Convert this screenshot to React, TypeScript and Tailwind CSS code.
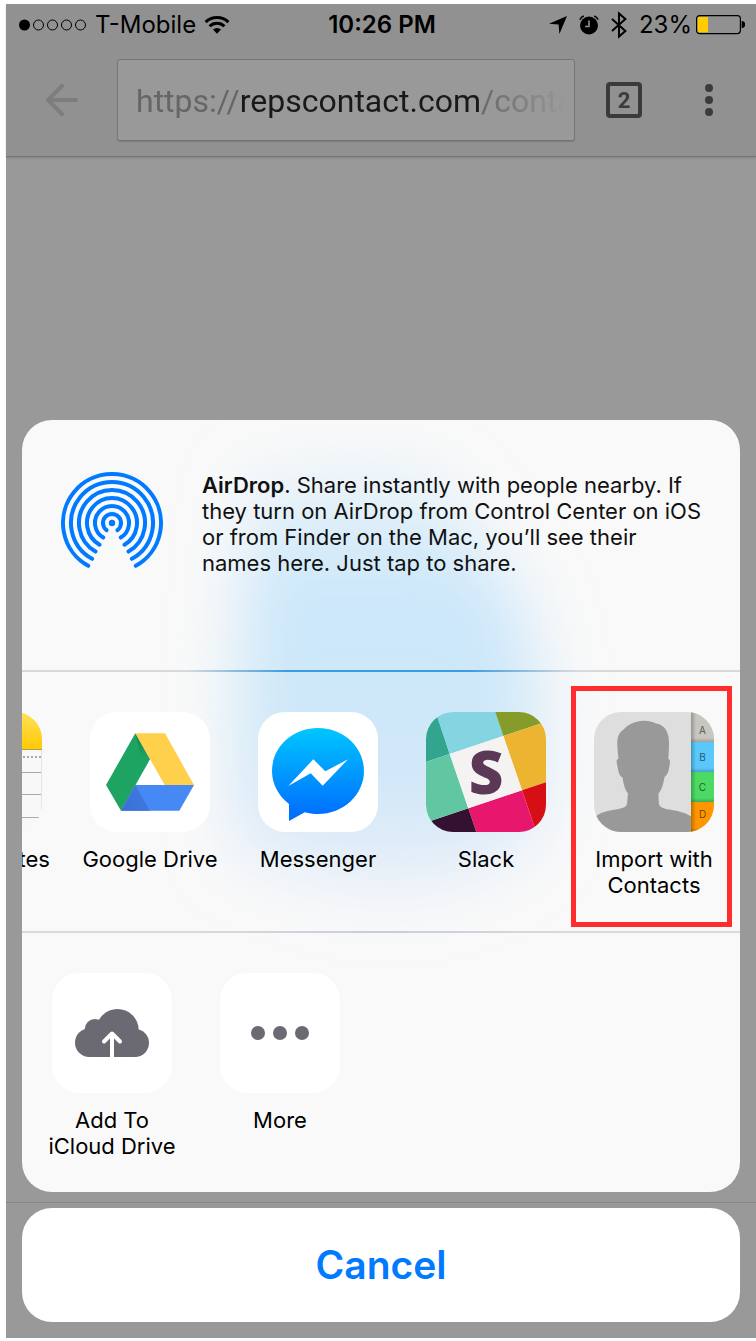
import type { ReactNode } from "react";

function SignalDots() {
  return (
    <svg width="68" height="12" viewBox="0 0 68 12" aria-label="Signal strength" role="img">
      <circle cx="5.5" cy="6" r="5.5" />
      {[19.5, 33.5, 47.5, 61.5].map((cx) => (
        <circle key={cx} cx={cx} cy="6" r="5" fill="none" stroke="#000" strokeWidth="1" />
      ))}
    </svg>
  );
}

function WifiIcon() {
  return (
    <svg width="26" height="20" viewBox="0 0 26 20" aria-label="Wi-Fi" role="img">
      <g fill="none" stroke="#000" strokeWidth="3">
        <path d="M1.6 7.2a16.4 16.4 0 0 1 22.8 0" />
        <path d="M5.6 11.3a10.6 10.6 0 0 1 14.8 0" />
      </g>
      <path d="M9 14.6a5.7 5.7 0 0 1 8 0l-4 4.2z" />
    </svg>
  );
}

function LocationIcon() {
  return (
    <svg width="18" height="18" viewBox="0 0 18 18" aria-hidden="true">
      <path d="M18 0 10.4 18 9.6 8.6 0 7.8z" />
    </svg>
  );
}

function AlarmIcon() {
  return (
    <svg width="20" height="20" viewBox="0 0 20 20" aria-hidden="true">
      <circle cx="10" cy="10.5" r="9" />
      <path d="M10 5.5v6H6" fill="none" stroke="#919191" strokeWidth="1.6" />
      <path d="M.8 4.6a8 8 0 0 1 4-3.6M19.2 4.6a8 8 0 0 0-4-3.6" fill="none" stroke="#000" strokeWidth="1.4" />
    </svg>
  );
}

function BluetoothIcon() {
  return (
    <svg width="16" height="28" viewBox="0 0 16 28" aria-hidden="true">
      <path d="m1 8 13.4 12L8 25.6V2.4L14.4 8 1 20" fill="none" stroke="#000" strokeWidth="2" />
    </svg>
  );
}

function BatteryIcon() {
  return (
    <svg width="49" height="20" viewBox="0 0 49 20" aria-hidden="true">
      <rect x=".6" y=".6" width="43.8" height="18" rx="3" fill="none" stroke="#000" strokeWidth="1.2" />
      <path d="M3 2h9v15.2H3a1.3 1.3 0 0 1-1.3-1.3V3.3A1.3 1.3 0 0 1 3 2z" fill="#ffcc00" />
      <path d="M45.6 6a3.600 3.600 0 0 1 0 7.200z" />
    </svg>
  );
}

function StatusBar() {
  return (
    <div className="grid h-10 grid-cols-[1fr_auto_1fr] items-center pl-[13px] pr-[11px] pt-[2px] text-2xl text-black">
      <div className="flex items-center">
        <SignalDots />
        <span className="ml-2">T-Mobile</span>
        <span className="ml-2">
          <WifiIcon />
        </span>
      </div>
      <span className="font-semibold">10:26 PM</span>
      <div className="flex items-center justify-end">
        <LocationIcon />
        <span className="ml-3">
          <AlarmIcon />
        </span>
        <span className="ml-3">
          <BluetoothIcon />
        </span>
        <span className="ml-3">23%</span>
        <span className="ml-1">
          <BatteryIcon />
        </span>
      </div>
    </div>
  );
}

function Toolbar() {
  return (
    <div className="flex items-center py-[15px]">
      <button type="button" aria-label="Back" className="flex w-[111px] shrink-0 justify-center">
        <svg width="32" height="32" viewBox="0 0 32 32" fill="none" stroke="#7d7d7d" strokeWidth="4" strokeLinecap="round">
          <path d="M30 16H3M16 2 2 16l14 14" strokeLinejoin="round" />
        </svg>
      </button>
      <button
        type="button"
        aria-label="Address"
        className="h-[82px] min-w-0 flex-1 rounded-[3px] border border-[#757575] bg-[#999999] pl-[18px] pr-2 pt-[2px] text-left font-[Roboto,sans-serif] text-[32px] text-[#666666] shadow-[0_1px_1px_rgba(0,0,0,0.15)]"
      >
        <span className="block overflow-hidden whitespace-nowrap [mask-image:linear-gradient(to_right,#000_calc(100%-90px),transparent)]">
          https://<span className="text-[#191919]">repscontact.com</span>/contacts
        </span>
      </button>
      <button type="button" aria-label="2 open tabs" className="flex w-[98px] shrink-0 justify-center">
        <span className="flex size-9 items-center justify-center rounded-[4px] border-4 border-[#3b3b3b] font-[Roboto,sans-serif] text-[22px] font-bold text-[#3b3b3b]">
          2
        </span>
      </button>
      <button type="button" aria-label="Menu" className="mr-[11px] flex w-[72px] shrink-0 justify-center">
        <svg width="8" height="32" viewBox="0 0 8 32" fill="#3b3b3b">
          <circle cx="4" cy="4" r="4" />
          <circle cx="4" cy="16" r="4" />
          <circle cx="4" cy="28" r="4" />
        </svg>
      </button>
    </div>
  );
}

const rings = [
  { r: 49, angle: 29 },
  { r: 41, angle: 29 },
  { r: 33, angle: 30 },
  { r: 25, angle: 30 },
  { r: 17, angle: 31 },
  { r: 9, angle: 37 },
];

function AirDropIcon() {
  return (
    <svg width="102" height="102" viewBox="-51 -51 102 102" className="shrink-0" aria-hidden="true">
      {rings.map(({ r, angle }) => {
        const a = (angle * Math.PI) / 180;
        const x = r * Math.sin(a);
        const y = r * Math.cos(a);
        return (
          <path
            key={r}
            d={`M${-x} ${y}A${r} ${r} 0 1 1 ${x} ${y}`}
            fill="none"
            stroke="#007aff"
            strokeWidth="4"
            strokeLinecap="round"
          />
        );
      })}
      <circle r="3.2" fill="#007aff" />
    </svg>
  );
}

function NotesIcon() {
  return (
    <svg viewBox="0 0 120 120" className="size-full" aria-hidden="true">
      <defs>
        <linearGradient id="notes-top" x1="0" y1="0" x2="0" y2="1">
          <stop offset="0" stopColor="#ffe05a" />
          <stop offset="1" stopColor="#ffcb05" />
        </linearGradient>
      </defs>
      <rect width="120" height="120" fill="#f8f8f8" />
      <rect width="120" height="37" fill="url(#notes-top)" />
      <path d="M0 37.5h120" stroke="#b09a50" />
      <path d="M1 45h119" stroke="#aaa" strokeWidth="2" strokeDasharray="2 2" />
      <path d="M0 60.5h120M0 82.5h120M0 105.5h117" stroke="#aaa" />
      <path d="M119.5 38v60" stroke="#e4e4e4" />
    </svg>
  );
}

function DriveIcon() {
  return (
    <svg viewBox="0 0 120 120" className="size-full" aria-hidden="true">
      <defs>
        <linearGradient id="drive-green" x1="0" y1="0" x2=".6" y2="1">
          <stop offset="0" stopColor="#17814c" />
          <stop offset="1" stopColor="#1da362" />
        </linearGradient>
        <linearGradient id="drive-blue" x1="0" y1="1" x2="1" y2=".4">
          <stop offset="0" stopColor="#3a6fd6" />
          <stop offset="1" stopColor="#4079e0" />
        </linearGradient>
      </defs>
      <path d="M45.3 21.3 60 47.3 31 98.7 16 73z" fill="#1da362" />
      <path d="M45.3 21.3 60 47.3 51 43z" fill="url(#drive-green)" />
      <path d="M45.3 21.3H75L104 73H74.7z" fill="#ffd04b" />
      <path d="M45.3 73H104L89.3 98.7H31z" fill="#4688f4" />
      <path d="M45.3 73 60 98.7H31z" fill="url(#drive-blue)" />
    </svg>
  );
}

function MessengerIcon() {
  return (
    <svg viewBox="0 0 120 120" className="size-full" aria-hidden="true">
      <defs>
        <linearGradient id="messenger" gradientUnits="userSpaceOnUse" x1="60" y1="16" x2="60" y2="102">
          <stop offset="0" stopColor="#00c6ff" />
          <stop offset="1" stopColor="#0070ff" />
        </linearGradient>
      </defs>
      <path
        d="M60 16c25.4 0 46 19.2 46 43s-20.6 43-46 43c-4.6 0-9-.6-13.2-1.8L31 109V92C20.8 84.1 14 72.3 14 59c0-23.8 20.6-43 46-43z"
        fill="url(#messenger)"
      />
      <path d="M30.3 74 55.3 47.3 67.3 59.3 90 47.3 64.7 73.7 52.7 61.3z" fill="#fff" />
    </svg>
  );
}

function SlackIcon() {
  return (
    <svg viewBox="0 0 120 120" className="size-full" aria-hidden="true">
      <path d="M0 0h10l13.7 42L0 50z" fill="#33a58f" />
      <path d="M9.5 0h60l7.8 24-53.6 18z" fill="#84d4e2" />
      <path d="M69.3 0H120v9.8L77.3 24z" fill="#859c2b" />
      <path d="M120 9.8v60.5L96 78.3 77.3 24z" fill="#ecb430" />
      <path d="M120 70.3V120h-9.8L96 78.3z" fill="#d50f14" />
      <path d="M110.2 120H50.3l-8-23.7L96 78.3z" fill="#e6176c" />
      <path d="M50.3 120H0v-9.5l42.3-14.2z" fill="#351131" />
      <path d="M0 110.5V50l23.7-8 18.6 54.3z" fill="#60c7a2" />
      <path d="M23.7 42 77.3 24 96 78.3 42.3 96.3z" fill="#f4f3f2" />
      <text
        x="60"
        y="82"
        textAnchor="middle"
        className="fill-[#5b3856] font-['Open_Sans',sans-serif] text-[60px] font-extrabold"
      >
        S
      </text>
    </svg>
  );
}

const contactTabs = [
  { letter: "A", y: 0, textY: 22, color: "#c8c6c1" },
  { letter: "B", y: 30, textY: 49, color: "#5ac8fa" },
  { letter: "C", y: 60, textY: 79, color: "#4cd964" },
  { letter: "D", y: 90, textY: 106, color: "#ff9500" },
];

function ContactsIcon() {
  return (
    <svg viewBox="0 0 120 120" className="size-full" aria-hidden="true">
      <defs>
        <linearGradient id="tab-side">
          <stop offset="0" stopColor="#000" stopOpacity=".25" />
          <stop offset="1" stopColor="#000" stopOpacity="0" />
        </linearGradient>
        <linearGradient id="tab-base" x1="0" y1="0" x2="0" y2="1">
          <stop offset="0" stopColor="#000" stopOpacity="0" />
          <stop offset="1" stopColor="#000" stopOpacity=".2" />
        </linearGradient>
      </defs>
      <rect width="120" height="120" fill="#dedede" />
      <path
        d="M0 120v-14c4-4 8-5.5 14-7 8-2 19-2 19-7.5l1-10C31 78 29.5 72 28.5 65.5c-3.5-2-4-6-5-11-.7-4-2-7 1-7.5C23.8 39 22.7 33 23.7 26c1-4 3-7 6-8.500C33 13 40 10 45 9.200c7-.8 12-.2 17 2.300 7 1 11 6 12.500 13 1 7 .3 15-.2 22.500 2.500 0 1.500 5 .8 9-.7 4-2 7.500-4.600 9C69.500 72 67.500 78 64.500 81.500l.3 10c.7 6 11.700 6 18.700 7.500 6 1.500 11 3.500 13.500 5.500V120z"
        fill="#999"
      />
      {contactTabs.map(({ letter, y, textY, color }) => (
        <g key={letter}>
          <rect x="97" y={y} width="23" height="30" fill={color} />
          <rect x="97" y={y + 26} width="23" height="4" fill="url(#tab-base)" />
          <text x="108.5" y={textY} textAnchor="middle" className="fill-black/60 text-[10px]">
            {letter}
          </text>
        </g>
      ))}
      <rect x="97" width="5" height="120" fill="url(#tab-side)" />
    </svg>
  );
}

function CloudUploadIcon() {
  return (
    <svg viewBox="0 0 120 120" className="size-full" aria-hidden="true">
      <g fill="#6b6a73">
        <circle cx="37.3" cy="69.7" r="14.3" />
        <circle cx="43" cy="56.3" r="10.3" />
        <circle cx="65.5" cy="57.2" r="21.2" />
        <circle cx="83" cy="70" r="14" />
        <path d="M37 60h46v24H37z" />
      </g>
      <path d="M60 86V61M52 68.5l8-8 8 8" fill="none" stroke="#fff" strokeWidth="4" strokeLinecap="round" strokeLinejoin="round" />
    </svg>
  );
}

function MoreIcon() {
  return (
    <svg viewBox="0 0 120 120" className="size-full" fill="#6b6a73" aria-hidden="true">
      <circle cx="38" cy="60" r="7" />
      <circle cx="60" cy="60" r="7" />
      <circle cx="82" cy="60" r="7" />
    </svg>
  );
}

function ShareItem({ icon, label, highlighted = false }: { icon: ReactNode; label: ReactNode; highlighted?: boolean }) {
  return (
    <button type="button" className="relative flex h-[259px] w-[168px] shrink-0 flex-col items-center pt-10">
      <span className="size-[120px] overflow-hidden rounded-[27px] bg-white">{icon}</span>
      <span className="mt-[14px] whitespace-nowrap text-[22px] leading-[26px] text-black">{label}</span>
      {highlighted && (
        <span className="absolute bottom-1 left-px right-[6px] top-[14px] border-[5px] border-[#ff2d2d]" />
      )}
    </button>
  );
}

function SheetGlow() {
  return (
    <svg className="absolute inset-0 size-full" viewBox="0 0 718 772" aria-hidden="true">
      <defs>
        <filter id="glow-blur" x="-50%" y="-50%" width="200%" height="200%">
          <feGaussianBlur stdDeviation="32" />
        </filter>
        <linearGradient id="glow-fill" x1="0" y1="0" x2="0" y2="1">
          <stop offset="0" stopColor="#cbe7fa" stopOpacity=".35" />
          <stop offset=".3" stopColor="#cbe7fa" />
          <stop offset=".75" stopColor="#d1e8f8" />
          <stop offset="1" stopColor="#dfe9f8" stopOpacity=".6" />
        </linearGradient>
      </defs>
      <path
        d="M228 60 400 50C450 110 515 180 515 270V400C490 450 400 485 330 470L215 430V300z"
        fill="url(#glow-fill)"
        filter="url(#glow-blur)"
      />
    </svg>
  );
}

function ShareSheet() {
  return (
    <section aria-label="Share" className="relative mx-4 overflow-hidden rounded-[30px] bg-[#f9f9f9]">
      <SheetGlow />
      <div className="relative flex h-[250px] items-start pl-[39px] pr-8 pt-[52px]">
        <AirDropIcon />
        <p className="ml-[39px] text-[22px] leading-[26px] text-[#111111]">
          <strong className="font-semibold">AirDrop</strong>. Share instantly with people nearby. If
          <br />
          they turn on AirDrop from Control Center on iOS
          <br />
          or from Finder on the Mac, you’ll see their
          <br />
          names here. Just tap to share.
        </p>
      </div>
      <div className="relative h-[2px] bg-[linear-gradient(to_right,#d8d8df_23%,#3b9be0_37%,#3b9be0_62%,#d8d8df_77%)]" />
      <div className="relative flex justify-end overflow-hidden pr-[2px]">
        <ShareItem icon={<NotesIcon />} label="Add to Notes" />
        <ShareItem icon={<DriveIcon />} label="Google Drive" />
        <ShareItem icon={<MessengerIcon />} label="Messenger" />
        <ShareItem icon={<SlackIcon />} label="Slack" />
        <ShareItem
          icon={<ContactsIcon />}
          label={
            <>
              Import with
              <br />
              Contacts
            </>
          }
          highlighted
        />
      </div>
      <div className="relative h-[2px] bg-[linear-gradient(to_right,#d8d8df_25%,#c8cdd9_50%,#d8d8df_75%)]" />
      <div className="relative flex pl-[6px]">
        <ShareItem
          icon={<CloudUploadIcon />}
          label={
            <>
              Add To
              <br />
              iCloud Drive
            </>
          }
        />
        <ShareItem icon={<MoreIcon />} label="More" />
      </div>
    </section>
  );
}

export default function App() {
  return (
    <div className="flex min-h-screen flex-col bg-white pb-[3px] pl-[6px] pt-1 font-[Inter,sans-serif]">
      <main className="flex flex-1 flex-col bg-[#999999]">
        <header className="border-b border-[#757575] bg-[#919191] shadow-[0_1px_2px_rgba(0,0,0,0.15)]">
          <StatusBar />
          <Toolbar />
        </header>
        <div className="min-h-16 flex-1" />
        <ShareSheet />
        <div className="h-[11px] border-b border-[#858585]" />
        <button
          type="button"
          className="mx-4 mb-4 mt-[5px] h-[114px] rounded-[30px] bg-white text-[39px] font-semibold text-[#007aff]"
        >
          Cancel
        </button>
      </main>
    </div>
  );
}
